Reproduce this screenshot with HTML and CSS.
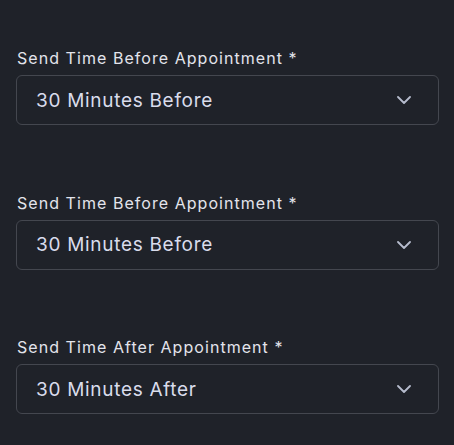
FILE: index.html
```html
<!DOCTYPE html>
<html lang="en">
  <head>
    <meta charset="UTF-8" />
    <meta name="viewport" content="width=device-width, initial-scale=1.0" />
    <title>Reminder Settings</title>
    <link rel="stylesheet" href="styles.css">
  </head>
  <body>
    <div class="settings">
      <div class="field">
        <label class="field-label">Send Time Before Appointment *</label>
        <div class="select">
          <span class="select-value">30 Minutes Before</span>
          <svg class="chevron" width="14" height="8" viewBox="0 0 14 8"><path d="M1 1l6 6 6-6" fill="none" stroke="currentColor" stroke-width="1.8" stroke-linecap="round" stroke-linejoin="round"/></svg>
        </div>
      </div>

      <div class="field">
        <label class="field-label">Send Time Before Appointment *</label>
        <div class="select">
          <span class="select-value">30 Minutes Before</span>
          <svg class="chevron" width="14" height="8" viewBox="0 0 14 8"><path d="M1 1l6 6 6-6" fill="none" stroke="currentColor" stroke-width="1.8" stroke-linecap="round" stroke-linejoin="round"/></svg>
        </div>
      </div>

      <div class="field">
        <label class="field-label">Send Time After Appointment *</label>
        <div class="select">
          <span class="select-value">30 Minutes After</span>
          <svg class="chevron" width="14" height="8" viewBox="0 0 14 8"><path d="M1 1l6 6 6-6" fill="none" stroke="currentColor" stroke-width="1.8" stroke-linecap="round" stroke-linejoin="round"/></svg>
        </div>
      </div>
    </div>
  </body>
</html>
```

FILE: styles.css
```css
body {
  margin: 0;
  background-color: #1f2229;
  font-family: "Inter", "Noto Sans", sans-serif;
  color: #e3e4ec;
}
.settings {
  display: flex;
  flex-direction: column;
  gap: 67.5px;
  padding: 48px 15px 0 16px;
}
.field {
  display: flex;
  flex-direction: column;
  gap: 7px;
}
.field-label {
  font-size: 16px;
  line-height: 20px;
  letter-spacing: 1.05px;
  padding-left: 1px;
}
.select {
  display: flex;
  align-items: center;
  justify-content: space-between;
  height: 48px;
  border: 1px solid #44474f;
  border-radius: 6px;
  padding: 0 27px 0 19px;
}
.select-value {
  font-size: 19px;
  letter-spacing: 0.7px;
  color: #d9dcec;
}
.chevron {
  color: #b6bccd;
}
```
